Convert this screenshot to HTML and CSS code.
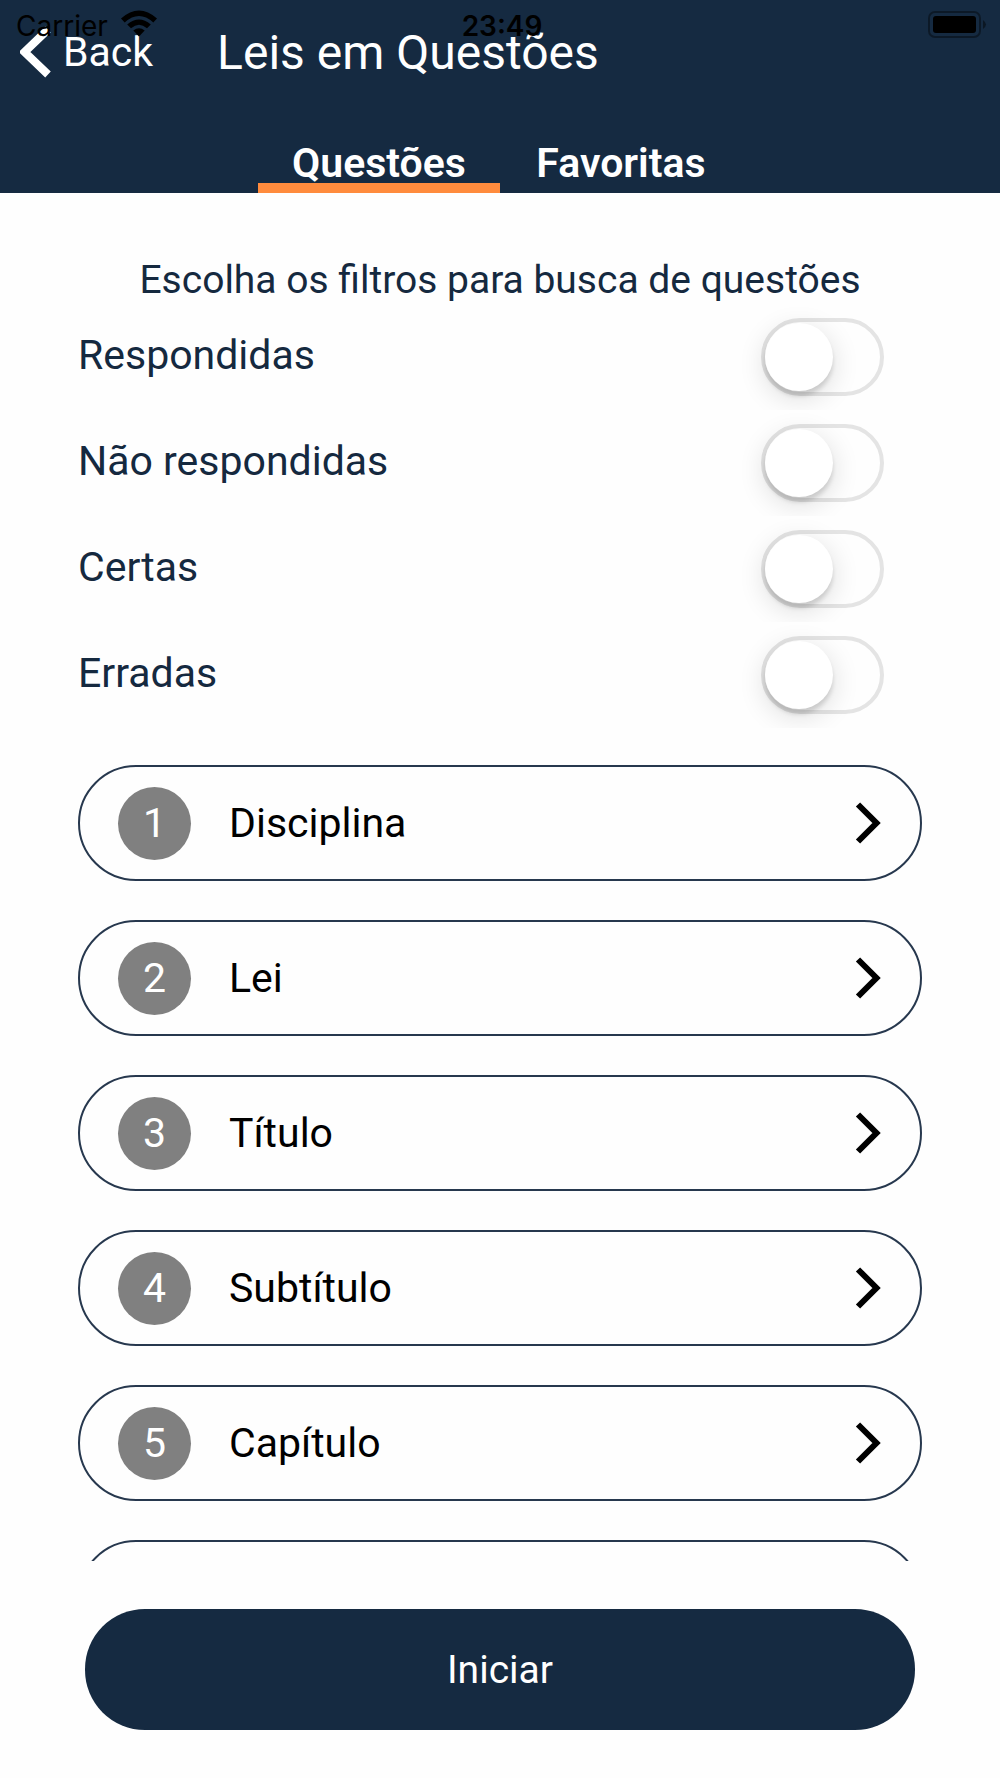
FILE: index.html
```html
<!DOCTYPE html>
<html lang="pt-BR">
<head>
<meta charset="utf-8">
<meta name="viewport" content="width=device-width, initial-scale=1">
<title>Leis em Questões</title>
<link rel="stylesheet" href="styles.css">
</head>
<body>
<div class="status">
  <div class="carrier">
    <span>Carrier</span>
    <svg class="wifi" viewBox="0 0 38 27" aria-hidden="true">
      <path d="M1 8.600Q19-7.500 37 8.600L33.300 12.400Q19-.500 4.700 12.400Z"/>
      <path d="M7.200 14.500Q19 4.500 30.800 14.500L27 18.300Q19 11.300 11 18.300Z"/>
      <path d="M13.300 20.600Q19 15.900 24.700 20.600L19 26.500Z"/>
    </svg>
  </div>
  <time>23:49</time>
  <svg class="battery" viewBox="0 0 60 28" aria-hidden="true">
    <rect x="1" y="1" width="51" height="25" rx="6" fill="none" stroke="#000" stroke-opacity=".4" stroke-width="2"/>
    <rect x="5" y="5" width="43" height="17" rx="3"/>
    <path d="M55 9q6 4.500 0 9z" fill-opacity=".45"/>
  </svg>
</div>
<header class="header">
  <div class="nav">
    <a class="back" href="#">
      <svg class="back-icon" viewBox="0 0 32 52" aria-hidden="true"><path d="M28 3.500 4.500 26 28 48.500"/></svg>
      <span>Back</span>
    </a>
    <h1 class="title">Leis em Questões</h1>
  </div>
  <nav class="tabs">
    <a class="tab tab-active" href="#" aria-current="page">Questões</a>
    <a class="tab" href="#">Favoritas</a>
  </nav>
</header>
<main class="content">
  <p class="caption">Escolha os filtros para busca de questões</p>
  <div class="filters">
    <label class="filter"><span class="filter-name">Respondidas</span><input class="switch" type="checkbox" role="switch"></label>
    <label class="filter"><span class="filter-name">Não respondidas</span><input class="switch" type="checkbox" role="switch"></label>
    <label class="filter"><span class="filter-name">Certas</span><input class="switch" type="checkbox" role="switch"></label>
    <label class="filter"><span class="filter-name">Erradas</span><input class="switch" type="checkbox" role="switch"></label>
  </div>
  <div class="steps">
    <button class="step" type="button"><span class="number">1</span><span class="name">Disciplina</span><svg class="arrow" viewBox="0 0 26 42" aria-hidden="true"><path d="M3 2.500 21.500 21 3 39.500"/></svg></button>
    <button class="step" type="button"><span class="number">2</span><span class="name">Lei</span><svg class="arrow" viewBox="0 0 26 42" aria-hidden="true"><path d="M3 2.500 21.500 21 3 39.500"/></svg></button>
    <button class="step" type="button"><span class="number">3</span><span class="name">Título</span><svg class="arrow" viewBox="0 0 26 42" aria-hidden="true"><path d="M3 2.500 21.500 21 3 39.500"/></svg></button>
    <button class="step" type="button"><span class="number">4</span><span class="name">Subtítulo</span><svg class="arrow" viewBox="0 0 26 42" aria-hidden="true"><path d="M3 2.500 21.500 21 3 39.500"/></svg></button>
    <button class="step" type="button"><span class="number">5</span><span class="name">Capítulo</span><svg class="arrow" viewBox="0 0 26 42" aria-hidden="true"><path d="M3 2.500 21.500 21 3 39.500"/></svg></button>
    <button class="step" type="button" aria-label="6"></button>
  </div>
</main>
<footer class="footer">
  <button class="start" type="button">Iniciar</button>
</footer>
</body>
</html>
```
FILE: styles.css
```css
* {
  box-sizing: border-box;
}

body {
  margin: 0;
  height: 100vh;
  display: flex;
  flex-direction: column;
  background: #fefefe;
  color: #15293f;
  font-family: Roboto, "Liberation Sans", sans-serif;
  font-size: 41px;
}

a {
  color: inherit;
  text-decoration: none;
}

/* System status bar, floating over the header */
.status {
  position: absolute;
  top: 0;
  left: 0;
  right: 0;
  z-index: 1;
  height: 52px;
  padding: 0 12px 0 16px;
  display: grid;
  grid-template-columns: 1fr auto 1fr;
  align-items: center;
  color: #000;
  font-family: Inter, "Liberation Sans", sans-serif;
  font-size: 28px;
  line-height: 52px;
  pointer-events: none;
}

.status time {
  font-weight: 600;
}

.carrier {
  display: flex;
  gap: 12px;
}

.wifi {
  width: 38px;
  height: 27px;
  margin-top: 10px;
}

.battery {
  width: 60px;
  height: 28px;
  margin-bottom: 2px;
  justify-self: end;
}

.header {
  flex: none;
  background: #152a41;
  color: #fff;
}

.nav {
  height: 104px;
  padding-left: 20px;
  display: flex;
  align-items: center;
  gap: 64px;
}

.back {
  display: flex;
  align-items: center;
  gap: 11px;
}

.back-icon {
  width: 32px;
  height: 52px;
  fill: none;
  stroke: #fff;
  stroke-width: 8px;
}

.title {
  margin: 0;
  font-size: 48px;
  font-weight: 400;
}

.tabs {
  padding-top: 39px;
  display: flex;
  justify-content: center;
}

.tab {
  width: 242px;
  border-bottom: 10px solid transparent;
  font-weight: 600;
  line-height: 40px;
  text-align: center;
}

.tab-active {
  border-color: #ff8b3d;
}

.content {
  flex: 1;
  min-height: 0;
  overflow: hidden;
  padding: 63px 78px 0;
}

.caption {
  margin: 0;
  font-size: 39px;
  line-height: 48px;
  text-align: center;
}

.filter {
  height: 106px;
  padding-right: 38px;
  display: flex;
  align-items: center;
  justify-content: space-between;
  overflow: hidden;
}

.filter-name {
  padding-bottom: 4px;
}

.switch {
  appearance: none;
  margin: 0;
  width: 123px;
  height: 78px;
  padding: 1px 0;
  border: 4px solid #e4e4e4;
  border-radius: 39px;
}

.switch::before {
  content: "";
  display: block;
  width: 68px;
  height: 68px;
  border-radius: 50%;
  background: #fff;
  box-shadow: 0 7px 28px rgba(0, 0, 0, .14), 0 5px 4px rgba(0, 0, 0, .13);
}

.switch:checked::before {
  margin-left: auto;
}

.steps {
  margin-top: 37px;
  display: flex;
  flex-direction: column;
  gap: 39px;
}

.step {
  flex: none;
  height: 116px;
  padding: 0 39px 0 38px;
  display: flex;
  align-items: center;
  border: 2px solid #27384e;
  border-radius: 58px;
  background: none;
  color: #000;
  font: inherit;
}

.number {
  width: 73px;
  margin-right: 38px;
  border-radius: 50%;
  background: #808080;
  color: #fff;
  line-height: 73px;
  text-align: center;
}

.name {
  flex: 1;
  text-align: left;
}

.arrow {
  width: 26px;
  height: 42px;
  fill: none;
  stroke: #000;
  stroke-width: 6px;
}

.footer {
  flex: none;
  padding: 48px 85px;
}

.start {
  width: 100%;
  height: 121px;
  border: 0;
  border-radius: 60px;
  background: #152a41;
  color: #fff;
  font: inherit;
  font-size: 39px;
}
```
